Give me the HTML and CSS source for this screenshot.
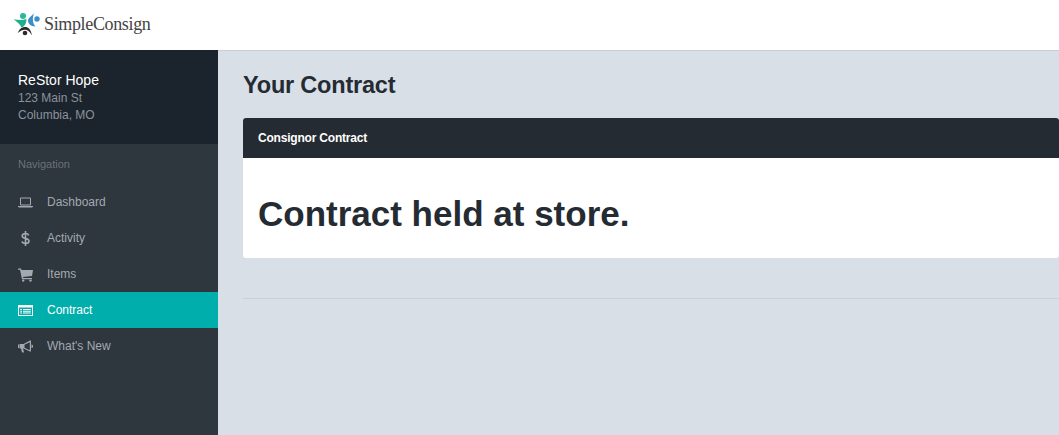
FILE: index.html
```html
<!DOCTYPE html>
<html lang="en">
	<head>
		<meta charset="UTF-8" />
		<title>SimpleConsign</title>
		<link rel="stylesheet" href="styles.css">
	</head>
	<body>
		<header class="topbar">
			<a class="logo" href="#">
				<svg class="logo-mark" width="26" height="26" viewBox="0 0 26 26">
					<circle cx="9" cy="5" r="3" fill="#2fb59a" />
					<path d="M-0.500 8C3 9 8 9.500 12.500 8 12.500 12.500 10.500 15.500 7.500 16.500 6.500 13.500 3 11 -0.500 8Z" fill="#1fae8f" />
					<path d="M20.500 1C20 4 14.500 6 14 9.500 13.800 12.500 17 15.500 21.500 15.500 19 12.500 17.500 8 20.500 1Z" fill="#3a8fc9" />
					<circle cx="23" cy="8" r="2.700" fill="#3a8fc9" />
					<circle cx="11" cy="22" r="2.300" fill="#2b2b2b" />
					<path d="M4 22C5 18 8 16 11 16 14.500 16 17 18.500 18 24.500 15.500 20.500 13.500 18.800 11 18.800 8.500 18.800 6.500 20 4 22Z" fill="#2b2b2b" />
				</svg>
				<span class="logo-text">SimpleConsign</span>
			</a>
		</header>
		<div class="layout">
			<aside class="sidebar">
				<div class="store">
					<h2>ReStor Hope</h2>
					<p>123 Main St</p>
					<p>Columbia, MO</p>
				</div>
				<div class="nav-label">Navigation</div>
				<ul class="nav">
					<li>
						<a href="#">
							<svg class="nav-icon" viewBox="0 0 15 15"><path d="M2.500 3h10v7h-10z" fill="none" stroke="currentColor" /><path d="M0 11h15v.6l-1 .9H1l-1-.9z" fill="currentColor" /></svg>
							Dashboard
						</a>
					</li>
					<li>
						<a href="#">
							<svg class="nav-icon" viewBox="0 0 15 15"><path d="M10.800 4.300C10.200 3 9 2.500 7.500 2.500 5.500 2.500 4.200 3.500 4.200 5c0 3.300 6.800 1.700 6.800 5 0 1.500-1.500 2.500-3.500 2.500-1.700 0-3-.7-3.700-2M7.500 0v15" fill="none" stroke="currentColor" stroke-width="1.600" /></svg>
							Activity
						</a>
					</li>
					<li>
						<a href="#">
							<svg class="nav-icon" viewBox="0 0 15 15"><path d="M0 1.500h3l.5 1.500H15l-1 6-9 .9.300 1.100H14v1.200H4L2 2.700H0z" fill="currentColor" /><circle cx="5.200" cy="13.600" r="1.200" fill="currentColor" /><circle cx="12.500" cy="13.600" r="1.200" fill="currentColor" /></svg>
							Items
						</a>
					</li>
					<li class="active">
						<a href="#">
							<svg class="nav-icon" viewBox="0 0 15 15"><path fill-rule="evenodd" d="M0 2h15v11H0zM1 4.500V12h13V4.500zM2.200 6h1.800v1H2.200zM5 6h7.800v1H5zM2.200 7.800h1.800v1H2.200zM5 7.800h7.800v1H5zM2.200 9.600h1.800v1H2.200zM5 9.600h7.800v1H5z" fill="currentColor" /></svg>
							Contract
						</a>
					</li>
					<li>
						<a href="#">
							<svg class="nav-icon" viewBox="0 0 15 15"><path d="M0 5.500h1V9H0zM1.500 5H5.500L12 1.500h1v11h-1L5.500 9.500H5l1 3.500-.5.500H4L3 9.500H1.500z" fill="currentColor" /><path d="M11.800 3.200 6.500 5.700v3.100l5.300 2.500z" fill="#2e363e" /><path d="M13.500 5.500c1 0 1.500.8 1.500 1.700S14.500 9 13.500 9z" fill="currentColor" /></svg>
							What's New
						</a>
					</li>
				</ul>
			</aside>
			<main class="content">
				<h1 class="page-title">Your Contract</h1>
				<section class="card">
					<div class="card-header">Consignor Contract</div>
					<div class="card-body">
						<h1>Contract held at store.</h1>
					</div>
				</section>
				<hr class="divider" />
			</main>
		</div>
	</body>
</html>
```
FILE: styles.css
```css
* {
	box-sizing: border-box;
}

html,
body {
	height: 100%;
}

body {
	margin: 0;
	display: flex;
	flex-direction: column;
	overflow: hidden;
	font-family: "Liberation Sans", Arial, sans-serif;
	background-color: #d8dfe7;
	color: #252b32;
}

.topbar {
	display: flex;
	align-items: center;
	height: 51px;
	flex-shrink: 0;
	padding-left: 14px;
	background-color: #fff;
	border-bottom: 1px solid #c9ced4;
}

.logo {
	display: flex;
	align-items: center;
	gap: 4px;
	margin-top: -2px;
	text-decoration: none;
}

.logo-mark {
	overflow: visible;
}

.logo-text {
	font-family: "Liberation Serif", serif;
	font-size: 18px;
	letter-spacing: -0.35px;
	color: #444;
}

.layout {
	display: flex;
	flex: 1;
	margin-top: -1px;
}

.sidebar {
	width: 218px;
	flex-shrink: 0;
	background-color: #2e363e;
}

.store {
	height: 94px;
	padding: 21px 18px 0;
	background-color: #1b242c;
	font-size: 12px;
	color: #8b929a;
}

.store h2 {
	margin: 0 0 1px;
	font-size: 14px;
	font-weight: 400;
	line-height: 18px;
	color: #fff;
}

.store p {
	margin: 0;
	line-height: 17px;
}

.nav-label {
	padding: 13px 18px 0;
	height: 40px;
	font-size: 11px;
	line-height: 14px;
	color: #69727b;
}

.nav {
	margin: 0;
	padding: 0;
	list-style: none;
}

.nav a {
	display: flex;
	align-items: center;
	gap: 14px;
	height: 36px;
	padding-left: 18px;
	font-size: 12px;
	color: #a3a9b0;
	text-decoration: none;
}

.nav-icon {
	width: 15px;
	height: 15px;
}

.nav .active a {
	background-color: #00aeab;
	color: #fff;
}

.content {
	flex: 1;
	min-width: 0;
	padding-left: 25px;
}

.page-title {
	margin: 0;
	padding-top: 21px;
	height: 68px;
	font-size: 23.5px;
	font-weight: 700;
	line-height: 28px;
	letter-spacing: -0.2px;
}

.card {
	border-radius: 3px;
	background-color: #fff;
	overflow: hidden;
}

.card-header {
	height: 40px;
	padding-left: 15px;
	background-color: #252b32;
	font-size: 12px;
	font-weight: 700;
	letter-spacing: -0.2px;
	line-height: 40px;
	color: #fff;
}

.card-body {
	height: 100px;
	padding: 36px 15px 0;
}

.card-body h1 {
	margin: 0;
	font-size: 35px;
	font-weight: 700;
	line-height: 40px;
}

.divider {
	margin: 40px 0 0;
	border: 0;
	border-top: 1px solid #c8d0d9;
}
```
